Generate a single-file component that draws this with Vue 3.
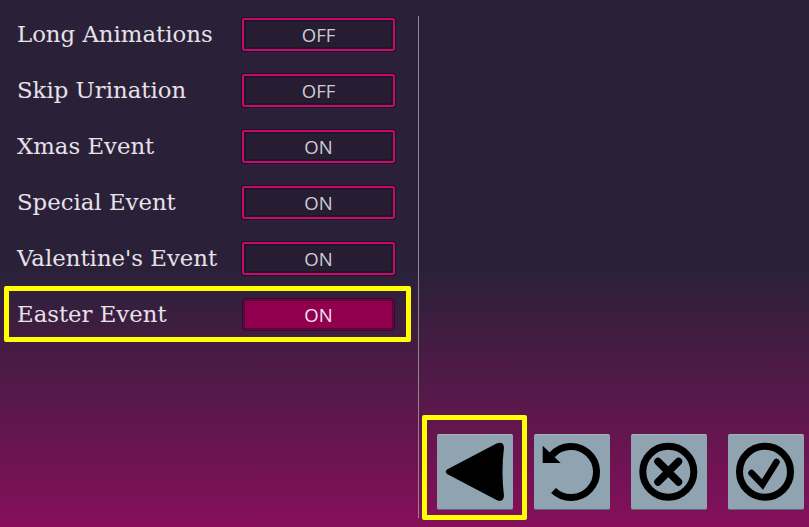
<script setup>
const rows = [
  { label: 'Long Animations', value: 'OFF' },
  { label: 'Skip Urination', value: 'OFF' },
  { label: 'Xmas Event', value: 'ON' },
  { label: 'Special Event', value: 'ON' },
  { label: "Valentine's Event", value: 'ON' },
  { label: 'Easter Event', value: 'ON', active: true },
]
</script>

<template>
  <div class="screen">
    <div class="list">
      <div v-for="r in rows" :key="r.label" class="row" :class="{ focused: r.active }">
        <span class="label">{{ r.label }}</span>
        <span class="toggle" :class="{ on: r.active }"><span class="toggle-text">{{ r.value }}</span></span>
      </div>
    </div>
    <div class="divider"></div>
    <div class="actions">
      <div class="focus-box">
        <div class="btn">
          <svg viewBox="0 0 76 76" width="76" height="76">
            <path d="M10.500 36.500 Q9 38 10.500 39 L60 65 Q65.500 67.500 66 62 Q63 38 66 13.500 Q65.500 8 60 10.500 Z" fill="#000" stroke="#000" stroke-width="2" stroke-linejoin="round"/>
          </svg>
        </div>
      </div>
      <div class="btn">
        <svg viewBox="0 0 76 76" width="76" height="76">
          <path d="M18 21 A25.500 25.500 0 1 1 19.500 56.500" fill="none" stroke="#000" stroke-width="7"/>
          <path d="M8.700 11.700 L26.700 29 L8.700 29 Z" fill="#000"/>
        </svg>
      </div>
      <div class="btn">
        <svg viewBox="0 0 76 76" width="76" height="76">
          <circle cx="37.300" cy="37.700" r="25.500" fill="none" stroke="#000" stroke-width="7"/>
          <path d="M27 27.500 L47.500 48 M47.500 27.500 L27 48" stroke="#000" stroke-width="7.500" stroke-linecap="round" fill="none"/>
        </svg>
      </div>
      <div class="btn">
        <svg viewBox="0 0 76 76" width="76" height="76">
          <circle cx="37" cy="37.700" r="25.500" fill="none" stroke="#000" stroke-width="7"/>
          <path d="M23.500 39 L34.500 50.500 L48.500 28" stroke="#000" stroke-width="6.500" stroke-linecap="round" fill="none"/>
        </svg>
      </div>
    </div>
  </div>
</template>

<style>
html, body { margin: 0; background: #2a2139; }
</style>

<style scoped>
.screen {
  width: 809px;
  height: 527px;
  display: flex;
  overflow: hidden;
  box-sizing: border-box;
  padding: 6px 0 7px 4px;
  background: linear-gradient(to bottom, #2a2139 0, #2a2139 270px, #850f5b 527px);
}
.list {
  width: 407px;
  display: flex;
  flex-direction: column;
}
.row {
  height: 56px;
  box-sizing: border-box;
  border: 5px solid transparent;
  border-radius: 2px;
  display: flex;
  align-items: center;
  padding-left: 8px;
}
.row.focused { border-color: #ffff00; }
.label {
  width: 224px;
  flex: none;
  font-family: "DejaVu Serif", serif;
  font-size: 22.800px;
  color: #e6e2e8;
  white-space: nowrap;
}
.toggle {
  width: 155px;
  height: 35px;
  box-sizing: border-box;
  border: 1px solid #1a1325;
  background: #261d33;
  box-shadow: inset 0 0 0 2px #cc0870, inset 0 0 0 4px #1f1729;
  display: flex;
  align-items: center;
  justify-content: center;
  border-radius: 3px;
}
.toggle-text {
  font-family: "Open Sans", sans-serif;
  font-size: 18.500px;
  color: #cfcbd3;
}
.toggle.on {
  width: 153px;
  height: 33px;
  margin-left: 1px;
  border-color: #2c1030;
  background: #90004f;
  box-shadow: inset 0 0 0 1px #700042, inset 0 0 0 2px #4d0a3c;
}
.toggle.on .toggle-text { color: #f0e4ee; }
.divider {
  width: 1px;
  flex: none;
  margin: 10px 0 2px 7px;
  background: #8a8a8a;
}
.actions {
  flex: 1;
  display: flex;
  align-items: flex-end;
  padding-left: 3px;
}
.focus-box {
  width: 105px;
  height: 105px;
  box-sizing: border-box;
  border: 5px solid #ffff00;
  border-radius: 2px;
  padding: 14px 0 0 10px;
  margin-right: 7px;
}
.btn {
  width: 76px;
  height: 76px;
  flex: none;
  background: #8fa3b1;
  border-radius: 2px;
  border-top: 1px solid #a3b4c0;
  border-bottom: 1px solid #5a6a7a;
  box-sizing: border-box;
  margin-bottom: 10px;
}
.btn + .btn { margin-left: 21px; }
.focus-box .btn { margin: 0; }
.btn svg { display: block; margin-top: -1px; }
</style>
